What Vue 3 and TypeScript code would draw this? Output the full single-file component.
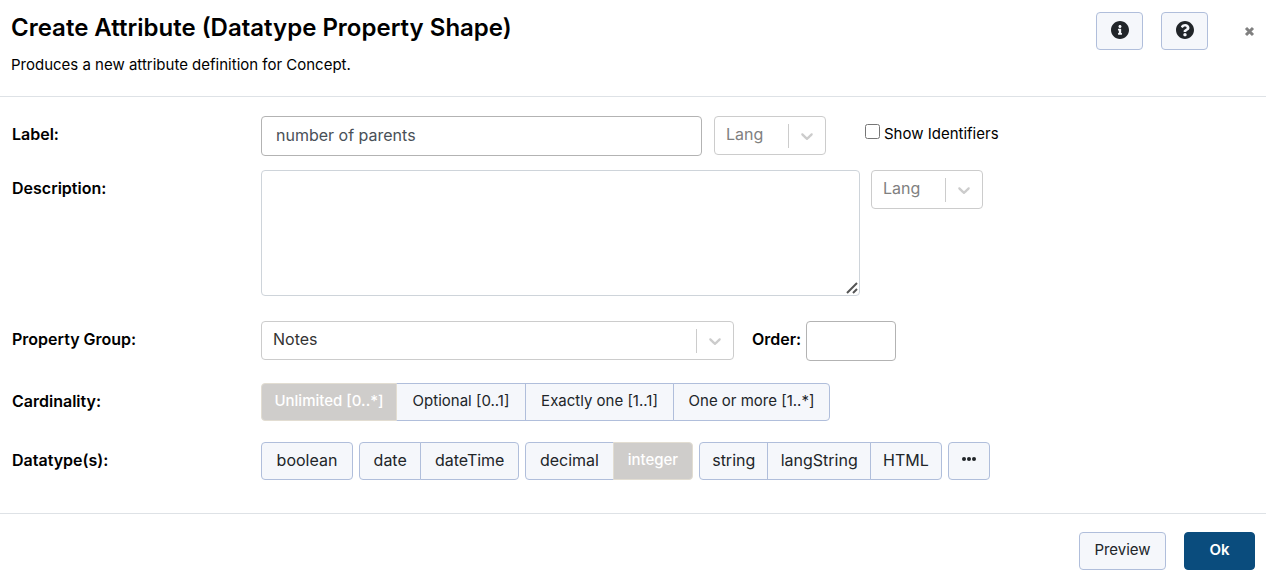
<script setup lang="ts">
import { ref } from 'vue'

const label = ref('number of parents')
const description = ref('')
const order = ref('')
const showIdentifiers = ref(false)
const labelLang = ref('')
const descriptionLang = ref('')
const propertyGroup = ref('Notes')

const cardinalities: string[] = ['Unlimited [0..*]', 'Optional [0..1]', 'Exactly one [1..1]', 'One or more [1..*]']
const cardinality = ref(cardinalities[0])

const datatypeGroups: string[][] = [
  ['boolean'],
  ['date', 'dateTime'],
  ['decimal', 'integer'],
  ['string', 'langString', 'HTML'],
]
const datatype = ref('integer')

const chevron =
  'M4.516 7.548c0.436-0.446 1.043-0.481 1.576 0l3.908 3.747 3.908-3.747c0.533-0.481 1.141-0.446 1.574 0 0.436 0.445 0.408 1.197 0 1.615-0.406 0.418-4.695 4.502-4.695 4.502-0.217 0.223-0.502 0.335-0.787 0.335s-0.57-0.112-0.789-0.335c0 0-4.287-4.084-4.695-4.502s-0.436-1.17 0-1.615z'
</script>

<template>
  <form class="dialog" @submit.prevent>
    <header class="header">
      <div class="heading">
        <h1>Create Attribute (Datatype Property Shape)</h1>
        <p>Produces a new attribute definition for Concept.</p>
      </div>
      <div class="tools">
        <button type="button" class="btn icon-btn" aria-label="Information">
          <svg viewBox="8 8 496 496" width="18" height="18"><path d="M256 8C119.043 8 8 119.083 8 256c0 136.997 111.043 248 248 248s248-111.003 248-248C504 119.083 392.957 8 256 8zm0 110c23.196 0 42 18.804 42 42s-18.804 42-42 42-42-18.804-42-42 18.804-42 42-42zm56 254c0 6.627-5.373 12-12 12h-88c-6.627 0-12-5.373-12-12v-24c0-6.627 5.373-12 12-12h12v-64h-12c-6.627 0-12-5.373-12-12v-24c0-6.627 5.373-12 12-12h64c6.627 0 12 5.373 12 12v100h12c6.627 0 12 5.373 12 12v24z" /></svg>
        </button>
        <button type="button" class="btn icon-btn" aria-label="Help">
          <svg viewBox="8 8 496 496" width="18" height="18"><path d="M504 256c0 136.997-111.043 248-248 248S8 392.997 8 256C8 119.083 119.043 8 256 8s248 111.083 248 248zM262.655 90c-54.497 0-89.255 22.957-116.549 63.758-3.536 5.286-2.353 12.415 2.715 16.258l34.699 26.31c5.205 3.947 12.621 3.008 16.665-2.122 17.864-22.658 30.113-35.797 57.303-35.797 20.429 0 45.698 13.148 45.698 32.958 0 14.976-12.363 22.667-32.534 33.976C247.128 238.528 216 254.941 216 296v4c0 6.627 5.373 12 12 12h56c6.627 0 12-5.373 12-12v-1.333c0-28.462 83.186-29.647 83.186-106.667 0-58.002-60.165-102-116.531-102zM256 338c-25.365 0-46 20.635-46 46 0 25.364 20.635 46 46 46s46-20.636 46-46c0-25.364-20.635-46-46-46z" /></svg>
        </button>
        <button type="button" class="close" aria-label="Close">
          <svg viewBox="0 0 11 11" width="11" height="11"><path d="M2 2L9 9M9 2L2 9" /></svg>
        </button>
      </div>
    </header>

    <main class="fields">
      <div class="row">
        <label class="name" for="label">Label:</label>
        <div class="controls">
          <input id="label" v-model="label" class="box text label-input" type="text" />
          <div class="select lang">
            <select v-model="labelLang" class="box" aria-label="Label language"><option value="">Lang</option></select>
            <span class="indicator"><svg viewBox="0 0 20 20" width="20" height="20"><path :d="chevron" /></svg></span>
          </div>
          <label class="check"><input v-model="showIdentifiers" type="checkbox" /><span>Show Identifiers</span></label>
        </div>
      </div>

      <div class="row description-row">
        <label class="name" for="description">Description:</label>
        <div class="controls">
          <div class="area">
            <textarea id="description" v-model="description" class="box text"></textarea>
            <svg class="grip" viewBox="0 0 12 12" width="12" height="12"><path d="M1 11L11 1M7 11L11 7" /></svg>
          </div>
          <div class="select lang">
            <select v-model="descriptionLang" class="box" aria-label="Description language"><option value="">Lang</option></select>
            <span class="indicator"><svg viewBox="0 0 20 20" width="20" height="20"><path :d="chevron" /></svg></span>
          </div>
        </div>
      </div>

      <div class="row">
        <label class="name" for="group">Property Group:</label>
        <div class="controls">
          <div class="select group-select">
            <select id="group" v-model="propertyGroup" class="box"><option>Notes</option></select>
            <span class="indicator"><svg viewBox="0 0 20 20" width="20" height="20"><path :d="chevron" /></svg></span>
          </div>
          <label class="name order-name" for="order">Order:</label>
          <input id="order" v-model="order" class="box text order-input" type="text" />
        </div>
      </div>

      <div class="row cardinality-row">
        <span id="cardinality-name" class="name">Cardinality:</span>
        <div class="btn-group cardinalities" role="group" aria-labelledby="cardinality-name">
          <button
            v-for="item in cardinalities"
            :key="item"
            type="button"
            class="btn"
            :class="{ active: item === cardinality }"
            :aria-pressed="item === cardinality"
            @click="cardinality = item"
          >{{ item }}</button>
        </div>
      </div>

      <div class="row datatype-row">
        <span id="datatype-name" class="name">Datatype(s):</span>
        <div class="datatypes" role="group" aria-labelledby="datatype-name">
          <div v-for="group in datatypeGroups" :key="group[0]" class="btn-group">
            <button
              v-for="item in group"
              :key="item"
              type="button"
              class="btn"
              :class="{ active: item === datatype }"
              :aria-pressed="item === datatype"
              @click="datatype = item"
            >{{ item }}</button>
          </div>
          <button type="button" class="btn more" aria-label="More datatypes">
            <svg viewBox="0 0 14 4" width="14" height="4"><circle cx="2" cy="2" r="2" /><circle cx="7" cy="2" r="2" /><circle cx="12" cy="2" r="2" /></svg>
          </button>
        </div>
      </div>
    </main>

    <footer class="footer">
      <button type="button" class="btn preview">Preview</button>
      <button type="submit" class="btn ok">Ok</button>
    </footer>
  </form>
</template>

<style>
body {
  margin: 0;
  background: #fff;
}
</style>

<style scoped>
.dialog,
.dialog * {
  box-sizing: border-box;
}
.dialog {
  font: 400 15px/24px Inter, 'Liberation Sans', sans-serif;
  color: #000;
}
.header {
  display: flex;
  justify-content: space-between;
  padding: 12px 11px 19px;
  border-bottom: 1px solid #dee2e6;
}
h1 {
  margin: 0 0 9px;
  font-size: 24px;
  line-height: 32px;
  font-weight: 600;
}
p {
  margin: 0;
}
.tools {
  display: flex;
  align-items: flex-start;
  gap: 18px;
}
.btn {
  display: inline-flex;
  align-items: center;
  justify-content: center;
  height: 38px;
  margin: 0;
  padding: 0 12px 2px;
  border: 1px solid #b0bedb;
  border-radius: 4px;
  background: #f5f7fb;
  color: #212529;
  font: inherit;
  white-space: nowrap;
}
.btn svg {
  fill: #212529;
}
.icon-btn {
  width: 47px;
}
.close {
  display: flex;
  align-items: center;
  justify-content: center;
  width: 11px;
  height: 38px;
  margin-left: 18px;
  padding: 0;
  border: 0;
  background: none;
}
.close svg {
  flex: none;
  stroke: #808080;
  stroke-width: 3;
}
.fields {
  padding: 19px 12px 33px;
}
.row {
  display: grid;
  grid-template-columns: 249px 1fr;
}
.controls {
  display: flex;
  align-items: flex-start;
}
.name {
  padding-top: 6px;
  font-size: 16px;
  font-weight: 600;
}
.box {
  height: 40px;
  margin: 0;
  border: 1px solid #b3b3b3;
  border-radius: 4px;
  background: #fff;
  font: inherit;
  font-size: 16px;
}
.text {
  padding: 0 14px 2px;
  color: #495057;
}
.label-input {
  flex: 0 1 441px;
  min-width: 0;
  margin-right: 12px;
}
.select {
  display: grid;
}
.select > * {
  grid-area: 1 / 1;
}
.select select {
  width: 100%;
  height: 39px;
  padding: 0 48px 3px 11px;
  appearance: none;
  border-color: #ccc;
  color: #333;
}
.lang {
  width: 112px;
}
.select.lang select {
  padding-right: 36px;
  color: #808080;
}
.indicator {
  display: flex;
  align-items: center;
  justify-self: end;
  align-self: center;
  height: 24px;
  padding: 0 8px;
  margin-right: 1px;
  border-left: 1px solid #ccc;
  pointer-events: none;
}
.indicator svg {
  fill: #ccc;
}
.check {
  display: flex;
  gap: 4px;
  margin-left: 39px;
  padding-top: 6px;
}
.check input {
  width: 15px;
  height: 15px;
  margin: 2px 0 0;
}
.description-row {
  margin: 14px 0 25px;
}
.area {
  display: grid;
  flex: 0 1 599px;
  margin-right: 11px;
}
.area > * {
  grid-area: 1 / 1;
}
textarea.box {
  width: 100%;
  height: 126px;
  padding: 6px 14px;
  border-color: #ced4da;
}
textarea::-webkit-resizer {
  background: none;
}
.grip {
  place-self: end;
  margin: 2px;
  stroke: #555;
  stroke-width: 2;
  pointer-events: none;
}
.group-select {
  flex: 0 1 473px;
}
.order-name {
  width: 54px;
  margin-left: 18px;
}
.order-input {
  width: 90px;
}
.cardinality-row {
  margin: 22px 0 21px;
}
.btn-group {
  display: flex;
}
.btn-group .btn {
  flex: 1 1 auto;
}
.btn-group .btn:not(:first-child) {
  margin-left: -1px;
  border-top-left-radius: 0;
  border-bottom-left-radius: 0;
}
.btn-group .btn:not(:last-child) {
  border-top-right-radius: 0;
  border-bottom-right-radius: 0;
}
.btn.active {
  position: relative;
  border-color: #e2ddd2;
  background: #cfcdcb;
  color: #fff;
  font-weight: 500;
}
.cardinalities {
  display: grid;
  grid-template-columns: 136px 129px 148px 156px;
}
.datatypes {
  display: grid;
  grid-template-columns: 92px 160px 168px 243px 42px;
  gap: 6px;
  font-size: 16px;
}
.datatypes .btn.active {
  font-size: 15px;
}
.more {
  padding-bottom: 4px;
}
.footer {
  display: flex;
  justify-content: flex-end;
  gap: 18px;
  padding: 18px 11px 10px;
  border-top: 1px solid #dee2e6;
}
.preview {
  width: 87px;
}
.ok {
  width: 71px;
  border-color: #0a4c7d;
  background: #0a4c7d;
  color: #fff;
  font-weight: 600;
}
</style>
